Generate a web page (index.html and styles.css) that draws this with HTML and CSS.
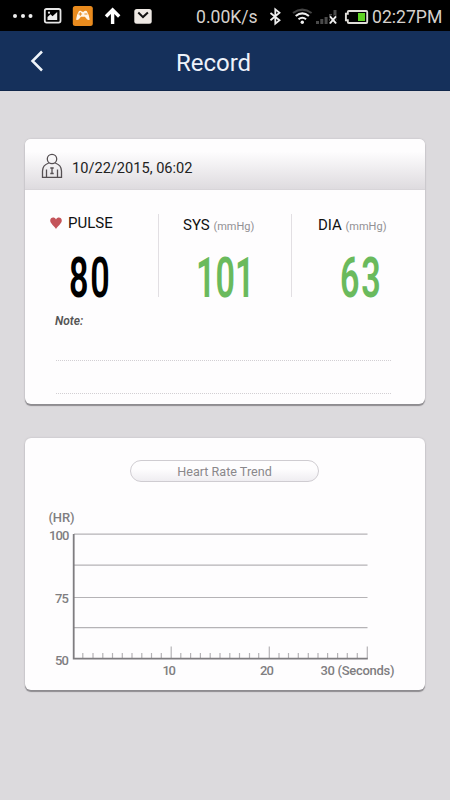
FILE: index.html
```
<!DOCTYPE html>
<html lang="en">
<head>
<meta charset="utf-8">
<title>Record</title>
<link rel="stylesheet" href="styles.css">
</head>
<body>
<div class="status">
  <svg class="status-left" width="160" height="31" viewBox="0 0 160 31" aria-hidden="true">
    <g fill="#eee"><circle cx="15" cy="16" r="2"/><circle cx="23" cy="16" r="2"/><circle cx="30.500" cy="16" r="2"/></g>
    <rect x="44.800" y="9" width="15.700" height="13.600" rx="1.800" fill="none" stroke="#e6e6e6" stroke-width="1.800"/>
    <path d="M47.500 20v-3l3-2.800 2 2 4.700-4.200v8z" fill="#eee"/><circle cx="49" cy="12.700" r="1.100" fill="#eee"/>
    <rect x="72.800" y="6" width="20" height="20" rx="2.500" fill="#e98b1e"/>
    <path d="M79 11q2-1 3 .8h1.700q1-1.800 3-.8 2.600 4 3 8.500-1.800 1.600-3.800-1.500l-1-1.200h-4l-1 1.200q-2 3.100-3.800 1.500Q76.400 15 79 11z" fill="#fff5e7"/>
    <path d="M80.300 12.200v3.600M78.500 14h3.600M84.400 14h3" stroke="#e98b1e"/>
    <path d="M112.600 24V10M106 16.500l6.600-6.600 6.600 6.600" fill="none" stroke="#fff" stroke-width="3.400"/>
    <rect x="134.300" y="9" width="17.400" height="14.800" rx="2.500" fill="#eee9e4"/>
    <path d="M138.300 12.500l4.700 4.600 4.900-4.600" fill="none" stroke="#111" stroke-width="2"/>
  </svg>
  <span class="speed">0.00K/s</span>
  <svg class="status-right" width="103" height="31" viewBox="266 0 103 31" aria-hidden="true">
    <path d="M270.500 13l9 7.200-4.200 3.500V9.300l4.200 3.500-9 7.400" fill="none" stroke="#eee" stroke-width="1.800"/>
    <g fill="none" stroke-width="2.100"><path d="M293 13q9.300-6.700 18.600 0" stroke="#444"/><path d="M295.700 16q6.600-5.300 13.200 0" stroke="#eee"/><path d="M298.500 19.300q3.800-3.100 7.600 0" stroke="#eee"/></g>
    <circle cx="302.300" cy="22.200" r="1.700" fill="#eee"/>
    <g fill="#4a4a4a"><path d="M316 21h3v3h-3zM320.300 19h3v5h-3zM324.600 17h3v7h-3zM329 14h3v10h-3zM333.500 10h3v14h-3z"/></g>
    <path d="M330 16.300l6 7M336 16.300l-6 7" stroke="#000" stroke-width="4"/>
    <path d="M330 16.300l6 7M336 16.300l-6 7" stroke="#eee" stroke-width="1.900"/>
    <path d="M348.800 11h17.400q1 0 1 1v10q0 1-1 1h-17.400q-1 0-1-1v-1.700h-1.900v-6.600h1.900V12q0-1 1-1z" fill="none" stroke="#e0ded9" stroke-width="1.900"/>
    <path d="M358 13h7v8h-7z" fill="#5fd323"/>
  </svg>
  <span class="clock">02:27PM</span>
</div>
<header class="bar">
  <svg class="back" width="14" height="22" viewBox="0 0 14 22" aria-hidden="true"><path d="M12 1.500L2.500 11 12 20.500" fill="none" stroke="#eff4fa" stroke-width="2.500"/></svg>
  <h1 class="title">Record</h1>
</header>
<main class="page">
  <section class="card reading">
    <div class="card-head">
      <svg class="person" width="22" height="26" viewBox="0 0 22 26" fill="none" stroke="#554f52" stroke-width="1.300" aria-hidden="true">
        <circle cx="11" cy="6" r="4.700"/>
        <path d="M7.800 10C3.500 11.500 1.500 14 1.500 18v6.300h19V18c0-4-2-6.500-6.300-8M5.500 16.500v7.500M16.500 16.500v7.500M9.300 15h3.400M11 15v5.500M9.300 20.500h3.400"/>
      </svg>
      <span class="date">10/22/2015, 06:02</span>
    </div>
    <div class="metrics">
      <div class="metric pulse">
        <div class="label"><svg class="heart" width="12" height="12" viewBox="0 0 12 12" aria-hidden="true"><path d="M6 12C4.600 9.200.2 6.700.2 3.500.2.200 4.500-.6 6 2.500 7.500-.6 11.800.200 11.800 3.500 11.800 6.700 7.400 9.200 6 12z" fill="#c4545a"/></svg>PULSE</div>
        <div class="value">80</div>
      </div>
      <div class="metric sys">
        <div class="label">SYS <small>(mmHg)</small></div>
        <div class="value">101</div>
      </div>
      <div class="metric dia">
        <div class="label">DIA <small>(mmHg)</small></div>
        <div class="value">63</div>
      </div>
    </div>
    <div class="note">Note:</div>
    <div class="rule"></div>
    <div class="rule"></div>
  </section>
  <section class="card trend">
    <div class="pill">Heart Rate Trend</div>
    <svg class="chart" width="400" height="180" viewBox="25 505 400 180">
      <g fill="none" stroke="#b5b3b6" stroke-width="1.200">
        <path d="M74 534.200H367.500M74 565.200H367.500M74 597.500H367.500M74 627.700H367.500"/>
        <path d="M82.800 653v6M93 653v6M102.800 653v6M112.500 653v6M122.300 653v6M132 653v6M141.800 653v6M151.500 653v6M161.300 653v6M171.200 646.500v12M180.800 653v6M190.600 653v6M200.400 653v6M210.200 653v6M220 653v6M229.800 653v6M239.500 653v6M249.500 653v6M258.700 653v6M269.300 646.500v12M279 653v6M288.500 653v6M298.300 653v6M308.300 653v6M318 653v6M327.600 653v6M337.600 653v6M347.300 653v6M357.300 653v6M367.300 646.500v12"/>
      </g>
      <path d="M73.700 534v124.700H367.800" fill="none" stroke="#7f7d80" stroke-width="1.800"/>
      <g class="axis">
        <text x="48.500" y="521.500" textLength="26">(HR)</text>
        <text x="49" y="540" textLength="20.500">100</text>
        <text x="55" y="602.500" textLength="13.800">75</text>
        <text x="55" y="665" textLength="13.800">50</text>
        <text x="162.500" y="674.500" textLength="13.500">10</text>
        <text x="260" y="674.500" textLength="14">20</text>
        <text x="320.500" y="674.500" textLength="74">30 (Seconds)</text>
      </g>
    </svg>
  </section>
</main>
</body>
</html>
```

FILE: styles.css
```
* { box-sizing: border-box; }
body {
  margin: 0;
  height: 800px;
  overflow: hidden;
  background: #dcdadd;
  font-family: Roboto, "Liberation Sans", sans-serif;
}
svg { display: block; flex: none; }
.status {
  display: flex;
  height: 31px;
  background: #000;
  color: #d6d1cd;
  font-size: 17.600px;
  line-height: 34px;
  white-space: nowrap;
}
.speed { width: 70px; margin-left: 36px; }
.clock { margin-left: 3px; }
.bar {
  display: grid;
  grid-template-columns: 60px 1fr 60px;
  height: 60px;
  align-items: center;
  background: #15305b;
  border-bottom: 1px solid #10264b;
}
.back { margin-left: 30px; }
.title {
  margin: 4px 0 0;
  padding-right: 23px;
  text-align: center;
  font-size: 24px;
  line-height: 30px;
  font-weight: 400;
  color: #edf2fa;
}
.page {
  display: flex;
  flex-direction: column;
  gap: 34px;
  padding: 48px 25px 0;
}
.card {
  border-radius: 6px;
  background: #fefdfe;
  box-shadow: 0 2px 1px #8e8c90, 0 0 2px #b8b6ba;
}
.reading { height: 265px; overflow: hidden; }
.card-head {
  display: flex;
  align-items: center;
  height: 51px;
  padding: 4px 16px 0;
  background: linear-gradient(#fefdfe 25%, #dedbdf);
  border-bottom: 1px solid #d8d5d9;
}
.date { margin: 3px 0 0 9px; font-size: 14.600px; color: #222; }
.metrics {
  display: grid;
  grid-template-columns: 133px 133px 134px;
  grid-template-rows: 83px;
  height: 83px;
  margin-top: 24px;
}
.metric + .metric { border-left: 1px solid #e2dfe3; }
.label {
  display: flex;
  align-items: baseline;
  height: 20px;
  color: #111;
  font-size: 15px;
  line-height: 20px;
  white-space: pre;
}
.label small { font-size: 11px; color: #929094; }
.heart { align-self: center; margin-right: 6px; }
.pulse .label { margin: -1px 0 0 25px; }
.sys .label { margin: 1px 0 0 24px; }
.dia .label { margin: 1px 0 0 26px; }
.value {
  width: max-content;
  font-size: 55px;
  line-height: 64px;
  font-weight: 600;
  letter-spacing: 3px;
  color: #6aba5d;
  transform: scaleX(.62);
  transform-origin: 0 0;
}
.pulse .value { color: #000; margin: 13px 0 0 44px; }
.sys .value { margin: 11px 0 0 37px; letter-spacing: 0; }
.dia .value { margin: 11px 0 0 48px; }
.note {
  height: 49px;
  padding: 17px 0 0 30px;
  font-size: 12px;
  line-height: 15px;
  font-weight: 600;
  font-style: italic;
  color: #555;
}
.rule { width: 335px; height: 33px; margin-left: 31px; }
.rule { border-bottom: 1px dotted #d2cfd3; }
.note + .rule { height: 15px; }
.trend { height: 252px; overflow: hidden; }
.pill {
  width: 189px;
  height: 22px;
  margin: 22px 0 0 105px;
  border: 1px solid #cfccd1;
  border-radius: 11px;
  background: linear-gradient(#fefdfe 40%, #efedf1);
  color: #8a888b;
  text-align: center;
  font-size: 12.600px;
  line-height: 21px;
}
.chart { margin-top: 23px; }
.axis { font-size: 13px; font-weight: 500; fill: #807e81; }
```
